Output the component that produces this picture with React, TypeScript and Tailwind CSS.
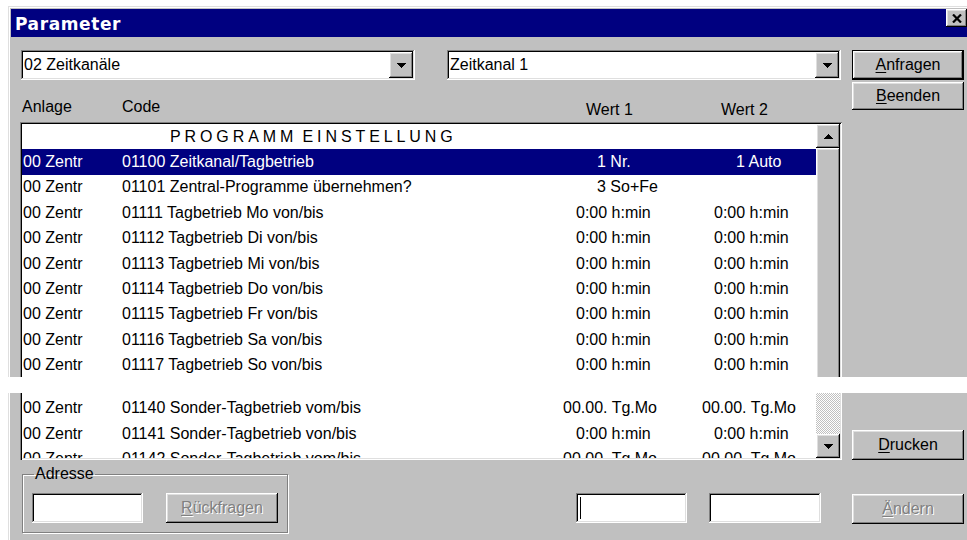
import React from 'react';

type Kind = 'nr' | 'sofe' | 'time' | 'date';

type Row = {
  anlage: string;
  code: string;
  w1?: string;
  w2?: string;
  kind: Kind;
  selected?: boolean;
};

// classic 3D bevels
const raised =
  'shadow-[inset_-1px_-1px_#000,inset_1px_1px_#fff,inset_-2px_-2px_#808080,inset_2px_2px_#dfdfdf]';
const sunken =
  'shadow-[inset_-1px_-1px_#fff,inset_1px_1px_#808080,inset_-2px_-2px_#dfdfdf,inset_2px_2px_#000]';

const w1Pad: Record<Kind, string> = {
  nr: 'pl-[37px]',
  sofe: 'pl-[37px]',
  time: 'pl-[16px]',
  date: 'pl-[3px]',
};
const w2Pad: Record<Kind, string> = {
  nr: 'pl-[36px]',
  sofe: 'pl-[36px]',
  time: 'pl-[14px]',
  date: 'pl-[2px]',
};

const days = ['Mo', 'Di', 'Mi', 'Do', 'Fr', 'Sa', 'So'];

const topRows: Row[] = [
  { anlage: '00 Zentr', code: '01100 Zeitkanal/Tagbetrieb', w1: '1 Nr.', w2: '1 Auto', kind: 'nr', selected: true },
  { anlage: '00 Zentr', code: '01101 Zentral-Programme übernehmen?', w1: '3 So+Fe', kind: 'sofe' },
  ...days.map((d, i) => ({
    anlage: '00 Zentr',
    code: `0111${i + 1} Tagbetrieb ${d} von/bis`,
    w1: '0:00 h:min',
    w2: '0:00 h:min',
    kind: 'time' as Kind,
  })),
];

const bottomRows: Row[] = [
  { anlage: '00 Zentr', code: '01140 Sonder-Tagbetrieb vom/bis', w1: '00.00. Tg.Mo', w2: '00.00. Tg.Mo', kind: 'date' },
  { anlage: '00 Zentr', code: '01141 Sonder-Tagbetrieb von/bis', w1: '0:00 h:min', w2: '0:00 h:min', kind: 'time' },
  { anlage: '00 Zentr', code: '01142 Sonder-Tagbetrieb vom/bis', w1: '00.00. Tg.Mo', w2: '00.00. Tg.Mo', kind: 'date' },
];

const Arrow = ({ down }: { down?: boolean }) => (
  <svg width="9" height="5" viewBox="0 0 9 5" shapeRendering="crispEdges">
    <polygon points={down ? '0,0 9,0 4.5,5' : '0,5 9,5 4.5,0'} fill="#000" />
  </svg>
);

const ListRow = ({ r }: { r: Row }) => (
  <div
    className={`flex h-[25.4px] shrink-0 items-center whitespace-nowrap leading-[18px] ${
      r.selected ? 'bg-[#000080] text-white' : ''
    }`}
  >
    <span className="w-[100px] shrink-0 pl-[1px]">{r.anlage}</span>
    <span className="w-[438px] shrink-0">{r.code}</span>
    <span className={`w-[140px] shrink-0 ${w1Pad[r.kind]}`}>{r.w1}</span>
    <span className={w2Pad[r.kind]}>{r.w2}</span>
  </div>
);

const Combo = ({ value }: { value: string }) => (
  <div className={`flex h-[30px] w-[394px] bg-white p-[2px] ${sunken}`}>
    <span className="flex-1 self-center pl-[1px] leading-[18px]">{value}</span>
    <div className={`flex w-[24px] items-center justify-center bg-[#c0c0c0] ${raised}`}>
      <Arrow down />
    </div>
  </div>
);

const Field = ({ width, caret }: { width: string; caret?: boolean }) => (
  <div className={`flex h-[30px] items-center bg-white pl-[4px] ${width} ${sunken}`}>
    {caret && <div className="h-[22px] w-[1px] bg-black" />}
  </div>
);

const Button = ({
  children,
  className = '',
  disabled,
}: {
  children: React.ReactNode;
  className?: string;
  disabled?: boolean;
}) => (
  <div
    className={`flex w-[112px] items-center justify-center bg-[#c0c0c0] leading-[18px] ${raised} ${
      disabled ? 'text-[#808080] [text-shadow:1px_1px_0_#fff]' : ''
    } ${className}`}
  >
    {children}
  </div>
);

const Key = ({ children }: { children: string }) => (
  <span className="underline decoration-1 underline-offset-[2px]">{children}</span>
);

export default function App() {
  return (
    <div className="h-[540px] w-[967px] overflow-hidden bg-white pt-[6px] font-['Liberation_Sans',Arial,sans-serif] text-[16px] text-black">
      {/* upper part of the dialog */}
      <div className="ml-[8px] h-[371px] w-[962px] overflow-hidden bg-[#c0c0c0] px-[3px] pt-[3px] shadow-[inset_1px_1px_#dfdfdf,inset_2px_2px_#fff]">
        <div className="flex h-[28px] items-start justify-between bg-[#000080] pl-[4px]">
          <span className="pt-[5px] font-['DejaVu_Sans',sans-serif] text-[17px] leading-[20px] font-bold tracking-[0.6px] text-white">
            Parameter
          </span>
          <div className={`flex h-[18px] w-[21px] items-center justify-center bg-[#c0c0c0] ${raised}`}>
            <svg width="10" height="9" viewBox="0 0 10 9">
              <path d="M1 0.5L9 8.5M9 0.5L1 8.5" stroke="#000" strokeWidth="2.2" />
            </svg>
          </div>
        </div>

        <div className="mt-[13px] flex gap-[10px] pl-[9px]">
          <div className="w-[822px]">
            <div className="flex gap-[32px] pl-[1px]">
              <Combo value="02 Zeitkanäle" />
              <Combo value="Zeitkanal 1" />
            </div>

            <div className="flex h-[42px] leading-[18px]">
              <span className="w-[102px] pl-[2px] pt-[18px]">Anlage</span>
              <span className="w-[464px] pt-[18px]">Code</span>
              <span className="w-[135px] pt-[21px]">Wert 1</span>
              <span className="pt-[21px]">Wert 2</span>
            </div>

            <div className="flex bg-white px-[2px] pt-[2px] shadow-[inset_1px_1px_#808080,inset_-1px_0_#fff,inset_2px_2px_#000,inset_-2px_0_#dfdfdf]">
              <div className="flex w-[794px] flex-col">
                <div className="flex h-[25.4px] items-center pl-[148px] text-[16px] leading-[18px] tracking-[3.9px] whitespace-nowrap [word-spacing:-3px]">
                  PROGRAMM EINSTELLUNG
                </div>
                {topRows.map((r) => (
                  <ListRow key={r.code} r={r} />
                ))}
              </div>
              <div className="flex w-[24px] flex-col bg-[#c0c0c0]">
                <div className={`flex h-[24px] items-center justify-center ${raised}`}>
                  <Arrow />
                </div>
                <div className={`h-[240px] ${raised}`} />
              </div>
            </div>
          </div>

          <div className="flex w-[112px] flex-col gap-[2px]">
            <div className="h-[30px] border border-black">
              <Button className="h-full w-full">
                <span>
                  <Key>A</Key>nfragen
                </span>
              </Button>
            </div>
            <Button className="h-[28px]">
              <span>
                <Key>B</Key>eenden
              </span>
            </Button>
          </div>
        </div>
      </div>

      <div className="h-[16px] bg-white" />

      {/* lower part of the dialog */}
      <div className="ml-[8px] h-[147px] w-[962px] bg-[#c0c0c0] px-[3px] shadow-[inset_1px_0_#dfdfdf,inset_2px_0_#fff]">
        <div className="flex gap-[10px] pl-[9px]">
          <div className="flex h-[67px] w-[822px] bg-white px-[2px] pb-[2px] shadow-[inset_1px_0_#808080,inset_2px_0_#000,inset_-1px_-1px_#fff,inset_-2px_-2px_#dfdfdf]">
            <div className="flex w-[794px] flex-col overflow-hidden pt-[2.5px]">
              {bottomRows.map((r) => (
                <ListRow key={r.code} r={r} />
              ))}
            </div>
            <div className="flex w-[24px] flex-col">
              <div className="flex-1 bg-[repeating-conic-gradient(#c0c0c0_0_25%,#fff_0_50%)] bg-[length:2px_2px]" />
              <div className={`flex h-[24px] items-center justify-center bg-[#c0c0c0] ${raised}`}>
                <Arrow down />
              </div>
            </div>
          </div>
          <div className="w-[112px] pt-[37px]">
            <Button className="h-[30px]">
              <span>
                <Key>D</Key>rucken
              </span>
            </Button>
          </div>
        </div>

        <div className="mt-[5px] flex items-start pl-[9px]">
          <fieldset className="ml-[2px] w-[266px] border border-[#808080] pb-[9px] pl-[9px] shadow-[1px_1px_0_#fff,inset_1px_1px_0_#fff]">
            <legend className="ml-[2px] px-[1px] leading-[18px]">Adresse</legend>
            <div className="mt-[10px] flex gap-[23px]">
              <Field width="w-[111px]" />
              <Button className="h-[30px]" disabled>
                <span>
                  <Key>R</Key>ückfragen
                </span>
              </Button>
            </div>
          </fieldset>
          <div className="mt-[28px] ml-[288px] flex">
            <Field width="w-[111px]" caret />
            <div className="ml-[22px]">
              <Field width="w-[112px]" />
            </div>
          </div>
          <div className="mt-[29px] ml-[31px]">
            <Button className="h-[30px]" disabled>
              <span>
                <Key>Ä</Key>ndern
              </span>
            </Button>
          </div>
        </div>
      </div>
    </div>
  );
}
